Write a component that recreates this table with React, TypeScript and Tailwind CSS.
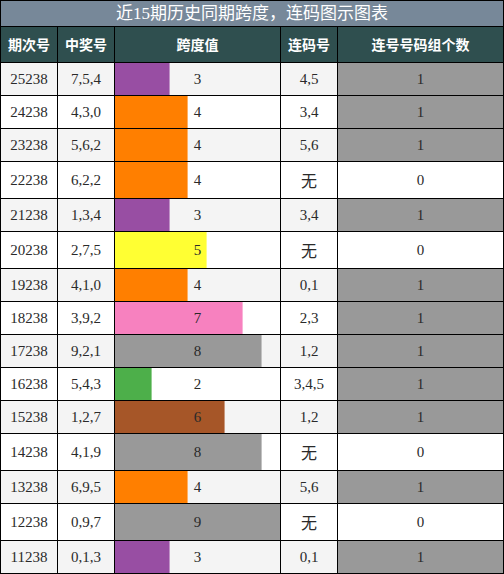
const ROWS: [string, string, number, string, number][] = [
  ["25238", "7,5,4", 3, "4,5", 1],
  ["24238", "4,3,0", 4, "3,4", 1],
  ["23238", "5,6,2", 4, "5,6", 1],
  ["22238", "6,2,2", 4, "无", 0],
  ["21238", "1,3,4", 3, "3,4", 1],
  ["20238", "2,7,5", 5, "无", 0],
  ["19238", "4,1,0", 4, "0,1", 1],
  ["18238", "3,9,2", 7, "2,3", 1],
  ["17238", "9,2,1", 8, "1,2", 1],
  ["16238", "5,4,3", 2, "3,4,5", 1],
  ["15238", "1,2,7", 6, "1,2", 1],
  ["14238", "4,1,9", 8, "无", 0],
  ["13238", "6,9,5", 4, "5,6", 1],
  ["12238", "0,9,7", 9, "无", 0],
  ["11238", "0,1,3", 3, "0,1", 1],
];

// span value -> bar colour (Set1 palette)
const barColor: Record<number, string> = {
  0: "bg-[#e41a1c]",
  1: "bg-[#377eb8]",
  2: "bg-[#4daf4a]",
  3: "bg-[#984ea3]",
  4: "bg-[#ff7f00]",
  5: "bg-[#ffff33]",
  6: "bg-[#a65628]",
  7: "bg-[#f781bf]",
  8: "bg-[#999999]",
  9: "bg-[#999999]",
};

const headers = ["期次号", "中奖号", "跨度值", "连码号", "连号号码组个数"];

export default function App() {
  return (
    <div className="w-[504px] bg-white font-['Liberation_Serif','Noto_Sans_CJK_SC',serif] text-[15px] text-[#2a2a2a]">
      <div className="grid grid-cols-[56px_56px_165px_56px_165px] gap-px bg-black p-px">
        <div className="col-span-5 flex h-[25px] items-center justify-center bg-[#778899] text-[17px] leading-none text-white">
          近15期历史同期跨度，连码图示图表
        </div>
        {headers.map((h) => (
          <div
            key={h}
            className="flex h-[35px] items-center justify-center bg-[#2f4f4f] font-['Noto_Sans_CJK_SC',sans-serif] text-[14px] font-bold text-white"
          >
            {h}
          </div>
        ))}
        {ROWS.map(([issue, nums, span, link, count], i) => {
          const rowBg = i % 2 === 0 ? "bg-[#f4f4f4]" : "bg-white";
          const none = link === "无";
          const h = none ? "h-[36px]" : "h-[32px]";
          return [
            <div key={issue + "a"} className={`flex items-center justify-center ${h} ${rowBg}`}>
              {issue}
            </div>,
            <div key={issue + "b"} className={`flex items-center justify-center ${h} ${rowBg}`}>
              {nums}
            </div>,
            <div key={issue + "c"} className={`relative flex items-center justify-center ${h} ${rowBg}`}>
              <div
                className={`absolute inset-y-0 left-0 ${span < 9 ? "border-r border-r-white/40" : ""} ${barColor[span]}`}
                style={{ width: `${(span / 9) * 100}%` }}
              />
              <span className="relative">{span}</span>
            </div>,
            <div
              key={issue + "d"}
              className={`flex items-center justify-center ${h} ${rowBg} ${none ? "font-['Noto_Sans_CJK_SC',sans-serif] text-[16px]" : ""}`}
            >
              {link}
            </div>,
            <div
              key={issue + "e"}
              className={`flex items-center justify-center ${h} ${count > 0 ? "bg-[#999999]" : rowBg}`}
            >
              {count}
            </div>,
          ];
        })}
      </div>
    </div>
  );
}
